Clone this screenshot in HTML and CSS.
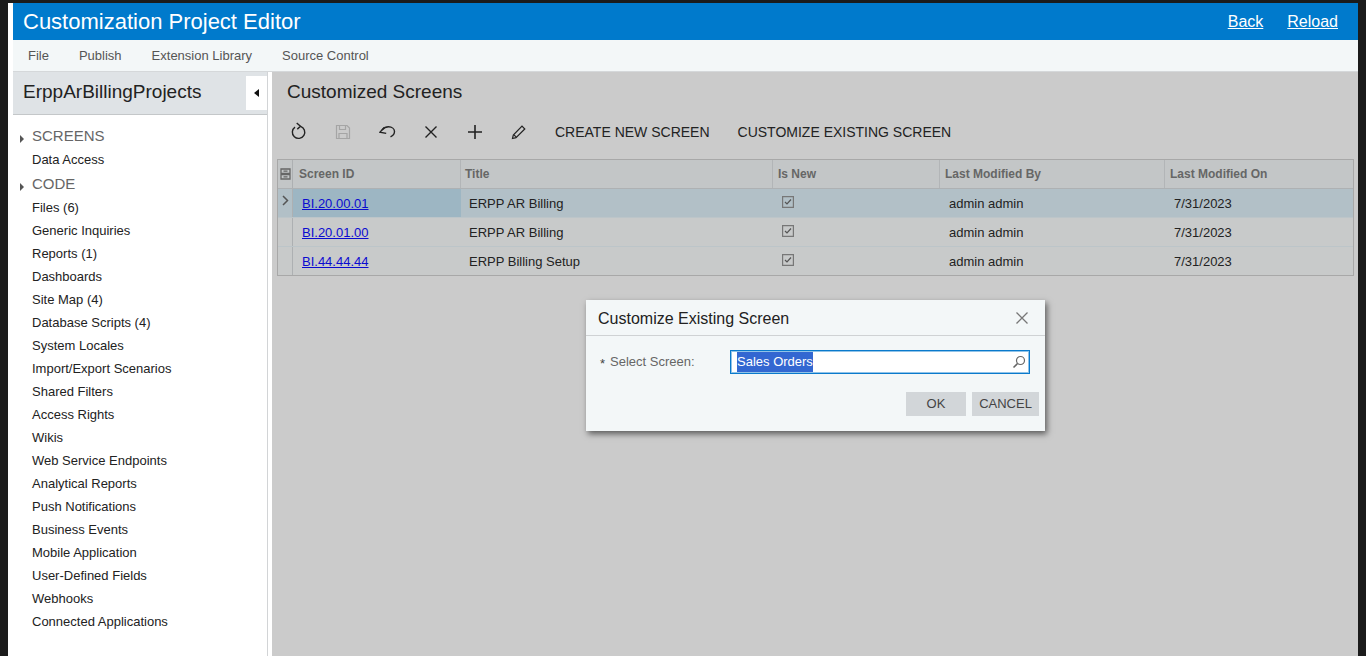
FILE: index.html
```html
<!DOCTYPE html>
<html lang="en">
<head>
<meta charset="utf-8">
<title>Customization Project Editor</title>
<link rel="stylesheet" href="styles.css">
</head>
<body>
<div class="window">
  <header class="topbar">
    <h1 class="app-title">Customization Project Editor</h1>
    <nav class="top-links"><a href="#">Back</a><a href="#">Reload</a></nav>
  </header>
  <nav class="menubar">
    <span>File</span><span>Publish</span><span>Extension Library</span><span>Source Control</span>
  </nav>
  <div class="workspace">
    <aside class="sidebar">
      <div class="side-head">
        <span class="side-title">ErppArBillingProjects</span>
        <button class="collapse" aria-label="Collapse"><svg width="6" height="8" viewBox="0 0 6 8"><path d="M5 0v8L0 4z" fill="#111"/></svg></button>
      </div>
      <ul class="tree">
        <li class="group">SCREENS</li>
        <li>Data Access</li>
        <li class="group">CODE</li>
        <li>Files (6)</li>
        <li>Generic Inquiries</li>
        <li>Reports (1)</li>
        <li>Dashboards</li>
        <li>Site Map (4)</li>
        <li>Database Scripts (4)</li>
        <li>System Locales</li>
        <li>Import/Export Scenarios</li>
        <li>Shared Filters</li>
        <li>Access Rights</li>
        <li>Wikis</li>
        <li>Web Service Endpoints</li>
        <li>Analytical Reports</li>
        <li>Push Notifications</li>
        <li>Business Events</li>
        <li>Mobile Application</li>
        <li>User-Defined Fields</li>
        <li>Webhooks</li>
        <li>Connected Applications</li>
      </ul>
    </aside>
    <main class="content">
      <h2 class="page-title">Customized Screens</h2>
      <div class="toolbar">
        <span class="tool"><svg class="refresh" width="18" height="18" viewBox="0 0 18 18" fill="none" stroke="#222" stroke-width="1.4"><path d="M10.500 4.300a6.200 6.200 0 1 1-5.500.8"/><path d="M6.700 1l3.800 3.300-3.200 2.800"/></svg></span>
        <span class="tool"><svg width="16" height="16" viewBox="0 0 16 16" fill="none" stroke="#a5a5a5" stroke-width="1.2"><path d="M1.500 1.500h10.500l2.500 2.500v10.500H1.500z"/><path d="M4.500 1.500v4h6v-4M4 14.500v-5h8v5"/></svg></span>
        <span class="tool"><svg width="17" height="12" viewBox="0 0 17 12" fill="none" stroke="#222" stroke-width="1.4"><path d="M5.200 1.500L.9 6.200l6.300 1.200"/><path d="M3 4C5 1.800 7 .8 9.500.8c3.500 0 6 2.100 6 4.700 0 2.400-1.600 4.200-4 5.300"/></svg></span>
        <span class="tool"><svg width="14" height="14" viewBox="0 0 14 14" fill="none" stroke="#222" stroke-width="1.4"><path d="M1.500 1.500l11 11M12.500 1.500l-11 11"/></svg></span>
        <span class="tool"><svg width="16" height="16" viewBox="0 0 16 16" fill="none" stroke="#222" stroke-width="1.6"><path d="M8 1v14M1 8h14"/></svg></span>
        <span class="tool"><svg width="16" height="16" viewBox="0 0 16 16" fill="none" stroke="#222" stroke-width="1.2"><path d="M1.500 14.500l.8-3.500 8.700-8.800 2.800 2.800-8.800 8.700z"/><path d="M3 10.800l2.300 2.300"/></svg></span>
        <span class="tool-text first">CREATE NEW SCREEN</span>
        <span class="tool-text">CUSTOMIZE EXISTING SCREEN</span>
      </div>
      <div class="grid">
        <div class="row head">
          <div class="cell c0"><svg width="11" height="12" viewBox="0 0 11 12" fill="none" stroke="#666" stroke-width="1.3"><path d="M1 1h9v4.500H1zM1 6.500h9V11H1zM3.500 3.200h4M3.500 8.800h4"/></svg></div>
          <div class="cell c1">Screen ID</div>
          <div class="cell c2">Title</div>
          <div class="cell c3">Is New</div>
          <div class="cell c4">Last Modified By</div>
          <div class="cell c5">Last Modified On</div>
        </div>
        <div class="row active">
          <div class="cell c0"><svg class="chevron" width="7" height="11" viewBox="0 0 7 11" fill="none" stroke="#555" stroke-width="1.5"><path d="M1 1l4.500 4.500L1 10"/></svg></div>
          <div class="cell c1"><a href="#">BI.20.00.01</a></div>
          <div class="cell c2">ERPP AR Billing</div>
          <div class="cell c3"><span class="check"><svg width="12" height="12" viewBox="0 0 12 12" fill="none" stroke="#555" stroke-width="1.2"><path d="M.6.600h10.800v10.800H.600z" stroke="#777"/><path d="M3 6l2 2 4-4.500"/></svg></span></div>
          <div class="cell c4">admin admin</div>
          <div class="cell c5">7/31/2023</div>
        </div>
        <div class="row">
          <div class="cell c0"></div>
          <div class="cell c1"><a href="#">BI.20.01.00</a></div>
          <div class="cell c2">ERPP AR Billing</div>
          <div class="cell c3"><span class="check"><svg width="12" height="12" viewBox="0 0 12 12" fill="none" stroke="#555" stroke-width="1.2"><path d="M.6.600h10.800v10.800H.600z" stroke="#777"/><path d="M3 6l2 2 4-4.500"/></svg></span></div>
          <div class="cell c4">admin admin</div>
          <div class="cell c5">7/31/2023</div>
        </div>
        <div class="row last">
          <div class="cell c0"></div>
          <div class="cell c1"><a href="#">BI.44.44.44</a></div>
          <div class="cell c2">ERPP Billing Setup</div>
          <div class="cell c3"><span class="check"><svg width="12" height="12" viewBox="0 0 12 12" fill="none" stroke="#555" stroke-width="1.2"><path d="M.6.600h10.800v10.800H.600z" stroke="#777"/><path d="M3 6l2 2 4-4.500"/></svg></span></div>
          <div class="cell c4">admin admin</div>
          <div class="cell c5">7/31/2023</div>
        </div>
      </div>
    </main>
  </div>
  <section class="dialog">
    <div class="dialog-head">
      <span class="dialog-title">Customize Existing Screen</span>
      <svg width="14" height="14" viewBox="0 0 14 14" fill="none" stroke="#777" stroke-width="1.3"><path d="M1.500 1.500l11 11M12.500 1.500l-11 11"/></svg>
    </div>
    <div class="dialog-body">
      <span class="req">*</span><span class="field-label">Select Screen:</span>
      <div class="input"><span class="selected">Sales Orders</span>
        <svg width="14" height="14" viewBox="0 0 14 14" fill="none" stroke="#666" stroke-width="1.2"><circle cx="8.500" cy="5.500" r="4"/><path d="M5.500 8.500L1.500 12.500" stroke-width="1.6"/></svg>
      </div>
    </div>
    <div class="dialog-foot"><button class="btn ok">OK</button><button class="btn cancel">CANCEL</button></div>
  </section>
</div>
</body>
</html>
```

FILE: styles.css
```css
* { box-sizing: border-box; }
html, body { height: 100%; }
body {
  margin: 0;
  background: #1b1b1b;
  overflow: hidden;
  padding: 3px 8px 0;
  font-family: "Liberation Sans", Arial, sans-serif;
  color: #222;
}
.window {
  position: relative;
  width: 1350px;
  height: 653px;
  background: #fff;
  padding-left: 5px;
  display: flex;
  flex-direction: column;
}
.topbar {
  height: 37px;
  flex: none;
  background: #007acc;
  display: flex;
  align-items: center;
  justify-content: space-between;
  padding: 0 20px 0 10px;
  color: #fff;
}
.app-title { margin: 0; font-size: 22px; font-weight: 400; line-height: 37px; }
.top-links { display: flex; gap: 24px; font-size: 16px; }
.top-links a { color: #fff; }
.menubar {
  height: 32px;
  flex: none;
  background: #f3f7f8;
  border-bottom: 1px solid #d5d8da;
  display: flex;
  align-items: center;
  gap: 30px;
  padding-left: 15px;
  font-size: 13px;
  color: #555;
}
.workspace { flex: 1; display: flex; min-height: 0; }
.sidebar { width: 255px; flex: none; border-right: 1px solid #d2d4d6; background: #fff; }
.side-head {
  height: 43px;
  background: #dfe3e6;
  border-bottom: 1px solid #c4c7c9;
  display: flex;
  align-items: flex-start;
  justify-content: space-between;
  padding-left: 10px;
  font-size: 19px;
  color: #222;
}
.side-title { line-height: 40px; }
.collapse {
  width: 21px;
  height: 34px;
  margin: 4px 0 0;
  padding: 0;
  border: 0;
  background: #fff;
  display: flex;
  align-items: center;
  justify-content: center;
}
.tree { list-style: none; margin: 0; padding: 8px 0 0 19px; font-size: 13px; line-height: 23px; color: #222; }
.tree .group { position: relative; font-size: 15px; line-height: 25px; color: #666; height: 25px; }
.tree .group::before {
  content: "";
  position: absolute;
  left: -12px;
  top: 12px;
  border-left: 4px solid #555;
  border-top: 4px solid transparent;
  border-bottom: 4px solid transparent;
}
.content { flex: 1; margin-left: 4px; background: #cbcbcb; padding: 0 4px 0 5px; min-width: 0; }
.page-title { margin: 0; padding-left: 10px; height: 40px; line-height: 40px; font-size: 19px; font-weight: 400; color: #222; }
.toolbar { display: flex; align-items: center; height: 40px; margin-bottom: 7px; }
.tool { width: 44px; height: 40px; display: flex; align-items: center; justify-content: center; }
.refresh { margin-bottom: 3px; }
.tool-text { font-size: 14px; color: #222; margin-left: 28px; }
.tool-text.first { margin-left: 14px; }
.grid { border: 1px solid #a8a8a8; border-bottom: 0; }
.row { display: flex; height: 29px; background: #c8caca; border-bottom: 1px solid #bcc5c9; font-size: 13px; color: #222; }
.row.head { background: #c3c6c7; border-bottom: 1px solid #aeb1b3; font-weight: 700; color: #666; font-size: 12px; }
.row.active { background: #b2c0c7; }
.row.last { border-bottom: 1px solid #a8a8a8; }
.cell { display: flex; align-items: center; padding-left: 9px; }
.row:not(.head) .cell { padding-top: 1px; }
.row.head .cell { border-right: 1px solid #b2b5b7; padding-left: 5px; }
.row:not(.head) .c2 { padding-left: 8px; }
.row.head .c1 { padding-left: 6px; }
.row.head .c2 { padding-left: 4px; }
.c1 { width: 168px; flex: none; }
.c2 { width: 312px; flex: none; }
.c3 { width: 167px; flex: none; }
.c4 { width: 225px; flex: none; }
.c5 { flex: 1; }
.row.head .c5 { border-right: 0; }
.row.active .c1 { background: #9db6c3; }
.row a { color: #0b0bd0; }
.row .cell.c0, .row.head .cell.c0 { width: 15px; flex: none; justify-content: center; padding: 0; border-right: 1px solid #adb0b2; }
.chevron { margin-bottom: 6px; }
.check { display: flex; margin-bottom: 4px; }
.dialog {
  position: absolute;
  left: 578px;
  top: 297px;
  width: 459px;
  height: 131px;
  background: #f3f7f8;
  box-shadow: 2px 3px 6px rgba(0, 0, 0, .55);
}
.dialog-head {
  height: 36px;
  border-bottom: 1px solid #cfd2d4;
  display: flex;
  align-items: center;
  justify-content: space-between;
  padding: 1px 16px 0 12px;
  font-size: 16px;
  color: #222;
}
.dialog-title { padding-top: 2px; }
.dialog-body { display: flex; align-items: center; height: 50px; padding: 2px 15px 0 14px; font-size: 13px; color: #666; }
.req { width: 10px; color: #444; padding-top: 3px; }
.field-label { width: 120px; margin-bottom: 2px; }
.input {
  flex: 1;
  height: 24px;
  background: #fff;
  border: 1px solid #0a7acc;
  box-shadow: inset 0 0 0 1px rgba(10, 122, 204, .45);
  display: flex;
  align-items: center;
  justify-content: space-between;
  padding: 0 3px 0 6px;
  font-size: 13px;
}
.selected { background: #3367d1; color: #fff; line-height: 20px; }
.dialog-foot { display: flex; justify-content: flex-end; gap: 6px; padding: 6px 6px 0 0; }
.btn { height: 24px; border: 0; padding: 0 0 2px; background: #d2d6d9; color: #444; font-family: inherit; font-size: 13px; }
.ok { width: 60px; }
.cancel { width: 67px; }
```
